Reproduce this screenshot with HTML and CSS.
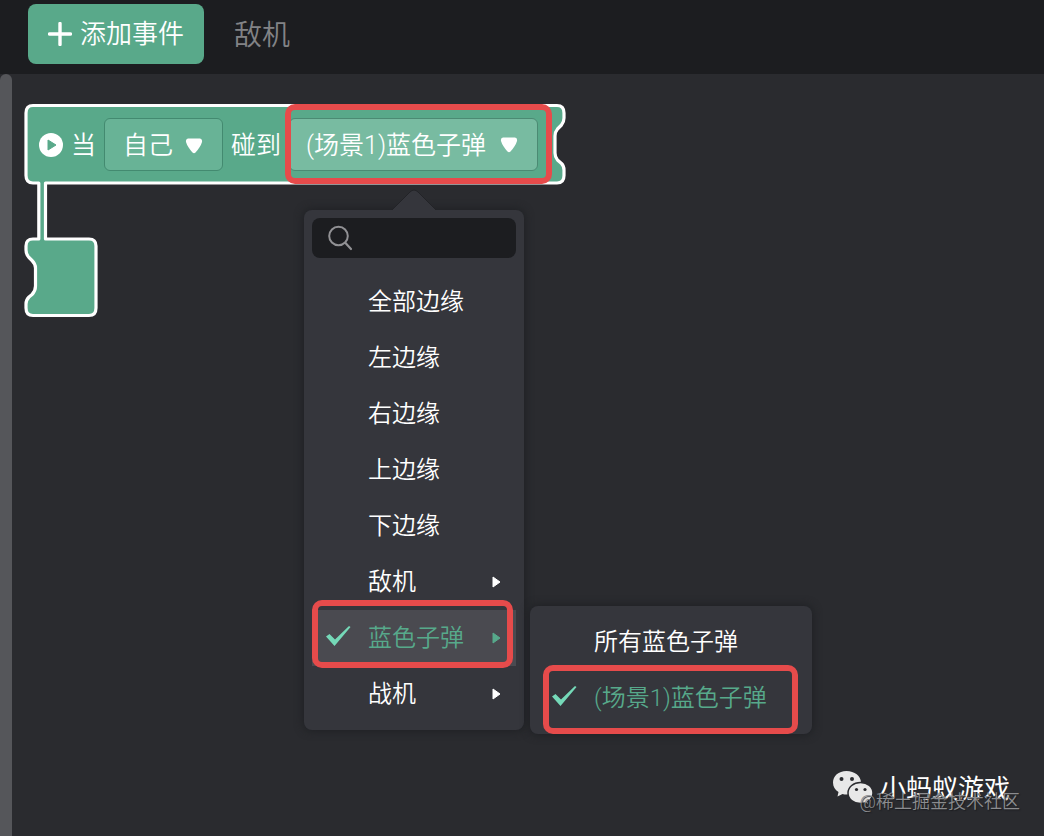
FILE: index.html
```html
<!DOCTYPE html>
<html lang="zh-CN">
<head>
<meta charset="utf-8">
<title>敌机</title>
<link rel="stylesheet" href="styles.css">
</head>
<body>
<header class="toolbar">
  <button class="add-event" type="button">
    <svg width="24" height="24" viewBox="0 0 24 24" aria-hidden="true"><path d="M12 1.5V22.5M1.5 12H22.5" fill="none" stroke="#fff" stroke-width="3.4" stroke-linecap="round"/></svg>
    <span>添加事件</span>
  </button>
  <span class="sprite-name">敌机</span>
</header>
<main class="workspace">
  <div class="scroll-track"></div>
  <div class="canvas">
    <div class="program">
      <svg class="block-shape" width="544" height="216" viewBox="24 103 544 216" aria-hidden="true">
        <path d="M33 105.5H557Q564 105.5 564 113V118Q564 122 561.5 125L557.500 129Q555 132 555 136V153Q555 157 557.500 160L561.5 163.5Q564 166 564 170V175.500Q564 183 557 183H45.500V239H89Q96 239 96 246V308Q96 315.500 89 315.500H33Q26 315.500 26 308V304Q26 300 29 297L32 294.500Q35.500 291 35.500 286V268Q35.500 264 32 260.500L29 257.500Q26 254.500 26 250V246Q26 239 33 239H38.800V183H33Q26 183 26 175.500V113Q26 105.500 33 105.500Z" fill="#59a98a" stroke="#fff" stroke-width="3.200" stroke-linejoin="round"/>
      </svg>
      <div class="event-row">
        <svg class="play" width="24" height="24" viewBox="0 0 24 24" aria-hidden="true"><circle cx="12" cy="12" r="12" fill="#fff"/><path d="M9 7L17 12L9 17Z" fill="#59a98a" stroke="#59a98a" stroke-linejoin="round"/></svg>
        <label class="label" for="subject">当</label>
        <div class="subject">
          <select id="subject"><option>自己</option></select>
          <svg class="caret" width="18" height="16" viewBox="0 0 18 16" aria-hidden="true"><path d="M3 .5H15Q17.500 1 17 4Q15.500 9 10.500 14.500Q9 16 7.500 14.500Q2.500 9 1 4Q.5 1 3 .5Z" fill="#fff"/></svg>
        </div>
        <span class="label">碰到</span>
        <div class="target">
          <button class="target-button" type="button" aria-haspopup="menu" aria-expanded="true">
            <span class="label">(场景1)蓝色子弹</span>
            <svg width="18" height="16" viewBox="0 0 18 16" aria-hidden="true"><path d="M3 .5H15Q17.500 1 17 4Q15.500 9 10.500 14.500Q9 16 7.500 14.500Q2.500 9 1 4Q.5 1 3 .5Z" fill="#fff"/></svg>
          </button>
        </div>
      </div>
      <div class="menu main-menu" role="menu">
        <svg class="pointer" width="48" height="22" viewBox="0 0 48 22" aria-hidden="true"><path d="M2 21L20 3Q24 -1 28 3L46 21" fill="#35363c" stroke="#222327"/><path d="M2 21H46V22H2Z" fill="#35363c"/></svg>
        <div class="search">
          <svg width="26" height="26" viewBox="0 0 26 26" aria-hidden="true"><circle cx="10.500" cy="11" r="9.300" fill="none" stroke="#919194" stroke-width="2"/><path d="M17.500 18L23 24" stroke="#919194" stroke-width="2.200" stroke-linecap="round"/></svg>
          <input type="search" aria-label="搜索">
        </div>
        <button class="item" type="button" role="menuitem">全部边缘</button>
        <button class="item" type="button" role="menuitem">左边缘</button>
        <button class="item" type="button" role="menuitem">右边缘</button>
        <button class="item" type="button" role="menuitem">上边缘</button>
        <button class="item" type="button" role="menuitem">下边缘</button>
        <button class="item" type="button" role="menuitem">敌机
          <svg class="more" width="9" height="12" viewBox="0 0 9 12" aria-hidden="true"><path d="M1 1L8 6L1 11Z" fill="currentColor" stroke="currentColor" stroke-linejoin="round"/></svg>
        </button>
        <div class="branch">
          <button class="item selected active" type="button" role="menuitem">
            <svg class="check" width="26" height="22" viewBox="0 0 26 22" aria-hidden="true"><path d="M0 11.500L3.500 9L9 14.500L23 1L24.500 2L8.500 21Z" fill="#75d9b8"/></svg>蓝色子弹
            <svg class="more" width="9" height="12" viewBox="0 0 9 12" aria-hidden="true"><path d="M1 1L8 6L1 11Z" fill="currentColor" stroke="currentColor" stroke-linejoin="round"/></svg>
          </button>
          <div class="menu submenu" role="menu">
            <button class="item" type="button" role="menuitem">所有蓝色子弹</button>
            <button class="item selected framed" type="button" role="menuitem">
              <svg class="check" width="26" height="22" viewBox="0 0 26 22" aria-hidden="true"><path d="M0 11.500L3.500 9L9 14.500L23 1L24.500 2L8.500 21Z" fill="#75d9b8"/></svg>(场景1)蓝色子弹
            </button>
          </div>
        </div>
        <button class="item" type="button" role="menuitem">战机
          <svg class="more" width="9" height="12" viewBox="0 0 9 12" aria-hidden="true"><path d="M1 1L8 6L1 11Z" fill="currentColor" stroke="currentColor" stroke-linejoin="round"/></svg>
        </button>
      </div>
    </div>
    <div class="credit">
      <svg width="42" height="36" viewBox="0 0 42 36" aria-hidden="true">
        <path d="M14.500 1C6.500 1 1 6 1 12.500C1 16.500 3 20 6.500 22L5.500 26.500L10.500 24Q12.500 24.500 14.500 24.500C22.500 24.500 29 19.500 29 12.500C29 6 22.500 1 14.500 1Z" fill="#e8e8e8"/>
        <path d="M28.500 12.500C21.500 12.500 16 17 16 23C16 29 21.500 33.500 28.500 33.500Q31 33.500 33 33L37 35.500L36 31.500C39 29.500 41 26.500 41 23C41 17 35.500 12.500 28.500 12.500Z" fill="#e8e8e8" stroke="#2a2b2f" stroke-width="1.500"/>
        <g fill="#2a2b2f"><circle cx="9.500" cy="9" r="2"/><circle cx="20" cy="9" r="2"/><circle cx="24.500" cy="19.500" r="1.600"/><circle cx="33" cy="19.500" r="1.600"/></g>
      </svg>
      <span class="account">小蚂蚁游戏</span>
      <span class="community">@稀土掘金技术社区</span>
    </div>
  </div>
</main>
</body>
</html>
```
FILE: styles.css
```css
* { box-sizing: border-box; }

body {
  margin: 0;
  min-height: 100vh;
  display: flex;
  flex-direction: column;
  background: #2a2b2f;
  color: #fff;
  font-family: Roboto, "Noto Sans CJK SC", sans-serif;
  font-size: 24px;
  font-weight: 350;
  line-height: 36px;
}

button, select, input {
  margin: 0;
  padding: 0;
  border: 0;
  background: none;
  color: inherit;
  font: inherit;
}

svg { display: block; flex: none; }

.label { padding-top: 3px; }

.toolbar {
  display: flex;
  align-items: flex-start;
  gap: 30px;
  padding: 4px 28px 10px;
  background: #1c1d20;
}

.add-event {
  display: flex;
  align-items: center;
  gap: 8px;
  height: 60px;
  padding: 0 20px;
  border-radius: 8px;
  background: #59a98a;
  font-size: 26px;
}

.sprite-name {
  padding-top: 2px;
  color: #828386;
  font-size: 28px;
  line-height: 60px;
  margin-bottom: -2px;
}

.workspace { flex: 1; display: flex; }

.scroll-track {
  width: 12px;
  border-radius: 6px 6px 0 0;
  background: #55565a;
}

.canvas { position: relative; flex: 1; }

.program { position: absolute; left: 12px; top: 29px; }

.event-row {
  position: absolute;
  left: 15px;
  top: 15px;
  display: flex;
  align-items: center;
  gap: 8px;
  font-size: 25px;
  white-space: nowrap;
}

.subject { position: relative; }

.subject select {
  display: block;
  appearance: none;
  width: 119px;
  height: 53px;
  padding: 3px 18px 0;
  border: 1px solid #438a70;
  border-radius: 6px;
  background: #68b396;
}

.caret {
  position: absolute;
  right: 20px;
  top: 20px;
  pointer-events: none;
}

.target { position: relative; }

.target-button {
  display: flex;
  align-items: center;
  justify-content: space-between;
  width: 249px;
  height: 53px;
  padding: 0 19px 0 16px;
  border: 1px solid #4b8a73;
  border-radius: 6px;
  background: #78bba1;
}

.target::after, .active::after, .framed::after {
  content: "";
  position: absolute;
  border: 6px solid #e64b4b;
  border-radius: 10px;
  pointer-events: none;
}

.target::after { inset: -14px -14px -13px -4px; }

.menu {
  position: absolute;
  padding: 8px;
  border-radius: 8px;
  background: #35363c;
  box-shadow: 0 0 8px 1px #1f2024;
  font-size: 24px;
}

.main-menu { left: 280px; top: 107px; width: 220px; }

.pointer { position: absolute; left: 86px; top: -21px; }

.search {
  display: flex;
  align-items: center;
  gap: 8px;
  height: 40px;
  margin-bottom: 16px;
  padding: 0 16px;
  border-radius: 8px;
  background: #1c1d20;
}

.search input { flex: 1; min-width: 0; outline: 0; }

.item {
  position: relative;
  display: flex;
  align-items: center;
  justify-content: space-between;
  width: 100%;
  height: 56px;
  padding: 0 15px 0 56px;
  white-space: nowrap;
}

.selected { color: #57a98b; }
.active { background: #4a4a50; }
.check { position: absolute; left: 14px; top: 15px; }
.branch { position: relative; }
.active::after { inset: -10px 3px -2px 0; }
.submenu { left: 218px; top: -4px; width: 282px; }
.framed::after { inset: -5px 6px -8px 5px; }

.credit {
  position: absolute;
  right: 24px;
  bottom: 29px;
  display: flex;
  align-items: center;
  gap: 6px;
  padding-right: 10px;
}

.account { padding-top: 3px; font-size: 26px; font-weight: 400; }

.community {
  position: absolute;
  right: 0;
  bottom: -9px;
  color: #8b8c8f;
  font-size: 18px;
  line-height: 28px;
  white-space: nowrap;
  text-shadow: 1px 1px 1px #1c1d20;
}
```
